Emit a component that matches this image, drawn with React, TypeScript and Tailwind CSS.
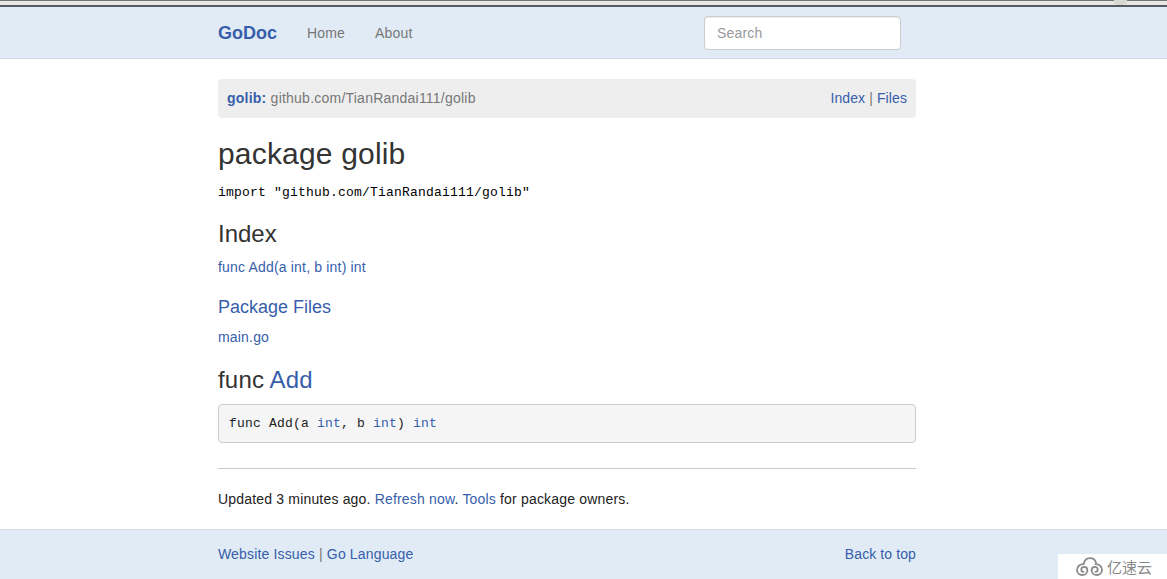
import React from "react";

function CloudLogo() {
  return (
    <svg width="27" height="19" viewBox="0 0 27 19" fill="none" stroke="#8a8a8a" strokeWidth="1.8" strokeLinecap="round">
      <path d="M8 6.5C8.5 3.2 11 1.2 14 1.2c3 0 5.3 1.8 6 4.6" />
      <path d="M7.5 7.2C3.8 7 1 9.7 1 13c0 3 2.4 5 5.2 5 3 0 5.2-2.2 5.2-4.8 0-2-1.4-3.4-3.2-3.4-1.7 0-2.9 1.2-2.9 2.7 0 1.3 1 2.3 2.2 2.3" />
      <path d="M19.5 7.2c3.7-.2 6.5 2.5 6.5 5.8 0 3-2.4 5-5.2 5-3 0-5.2-2.2-5.2-4.8 0-2 1.4-3.4 3.2-3.4 1.7 0 2.9 1.2 2.9 2.7 0 1.3-1 2.3-2.2 2.3" />
    </svg>
  );
}

export default function App() {
  return (
    <div className="relative h-[579px] overflow-hidden bg-white font-['Liberation_Sans',Arial,sans-serif] text-sm tracking-[0.18px] text-[#333]">
      {/* Browser edge left in the screenshot */}
      <div className="relative h-[7px] bg-[#e8e7e3] border-t border-b-2 border-t-[#777] border-b-[#555a60]">
        <div className="absolute left-[1114px] top-[-1px] h-[5px] w-[13px] rounded-b bg-[#d8d7d3]" />
      </div>

      <nav className="h-[52px] bg-[#e0ebf5] border-b border-[#d3dde8]">
        <div className="ml-[218px] flex h-full w-[698px] items-center">
          <a className="text-lg font-bold tracking-normal text-[#375eab]">GoDoc</a>
          <a className="ml-[30px] text-[#777]">Home</a>
          <a className="ml-[30px] text-[#777]">About</a>
          <input
            placeholder="Search"
            className="ml-auto mr-[15px] h-[34px] w-[197px] rounded border border-[#ccc] bg-white px-3 text-sm placeholder:text-[#999] shadow-[inset_0_1px_1px_rgba(0,0,0,0.075)]"
          />
        </div>
      </nav>

      <main className="ml-[218px] w-[698px]">
        <div className="mt-5 flex h-[39px] items-center justify-between rounded bg-[#eee] px-[9px] pb-[2px]">
          <div className="tracking-[0.23px]">
            <a className="font-bold text-[#375eab]">golib:</a>{" "}
            <span className="text-[#777]">github.com/TianRandai111/golib</span>
          </div>
          <div className="tracking-[0.1px] text-[#777]">
            <a className="text-[#375eab]">Index</a> | <a className="text-[#375eab]">Files</a>
          </div>
        </div>

        <h1 className="mt-[17px] text-[30px] leading-[38px]">package golib</h1>
        <p className="mt-[10px] font-['Liberation_Mono',monospace] text-[13px] leading-5 tracking-[0.2px] text-black">
          import "github.com/TianRandai111/golib"
        </p>

        <h2 className="mt-[16px] text-2xl leading-[30px] tracking-normal">Index</h2>
        <p className="mt-[8px] leading-5">
          <a className="text-[#375eab]">func Add(a int, b int) int</a>
        </p>

        <h3 className="mt-[18px] text-lg leading-[24px] tracking-normal">
          <a className="text-[#375eab]">Package Files</a>
        </h3>
        <p className="mt-[8px] leading-5">
          <a className="text-[#375eab]">main.go</a>
        </p>

        <h2 className="mt-[18px] text-2xl leading-[30px]">
          func <a className="text-[#375eab]">Add</a>
        </h2>
        <pre className="mt-[9px] h-[39px] rounded border border-[#ccc] bg-[#f5f5f5] px-[10px] py-[9px] font-['Liberation_Mono',monospace] text-[13px] leading-[19px] tracking-[0.2px] text-[#222]">
          func Add(a <a className="text-[#375eab]">int</a>, b <a className="text-[#375eab]">int</a>) <a className="text-[#375eab]">int</a>
        </pre>

        <hr className="mt-[25px] border-[#ccc]" />
        <p className="mt-[20px] leading-5 text-[#222]">
          Updated 3 minutes ago. <a className="text-[#375eab]">Refresh now</a>. <a className="text-[#375eab]">Tools</a> for package owners.
        </p>
      </main>

      <footer className="absolute inset-x-0 bottom-0 h-[50px] border-t border-[#d3dde8] bg-[#e0ebf5]">
        <div className="ml-[218px] flex h-full w-[698px] items-center justify-between pb-[2px]">
          <div className="tracking-[0.16px] text-[#777]">
            <a className="text-[#375eab]">Website Issues</a> | <a className="text-[#375eab]">Go Language</a>
          </div>
          <a className="tracking-[0.1px] text-[#375eab]">Back to top</a>
        </div>
      </footer>

      {/* Watermark */}
      <div className="absolute bottom-0 right-0 flex h-[25px] w-[109px] items-center gap-[4px] bg-white pl-[18px] font-['Noto_Sans_CJK_SC',sans-serif] text-[15px] tracking-normal text-[#8a8a8a]">
        <CloudLogo />
        <span className="whitespace-nowrap">亿速云</span>
      </div>
    </div>
  );
}
